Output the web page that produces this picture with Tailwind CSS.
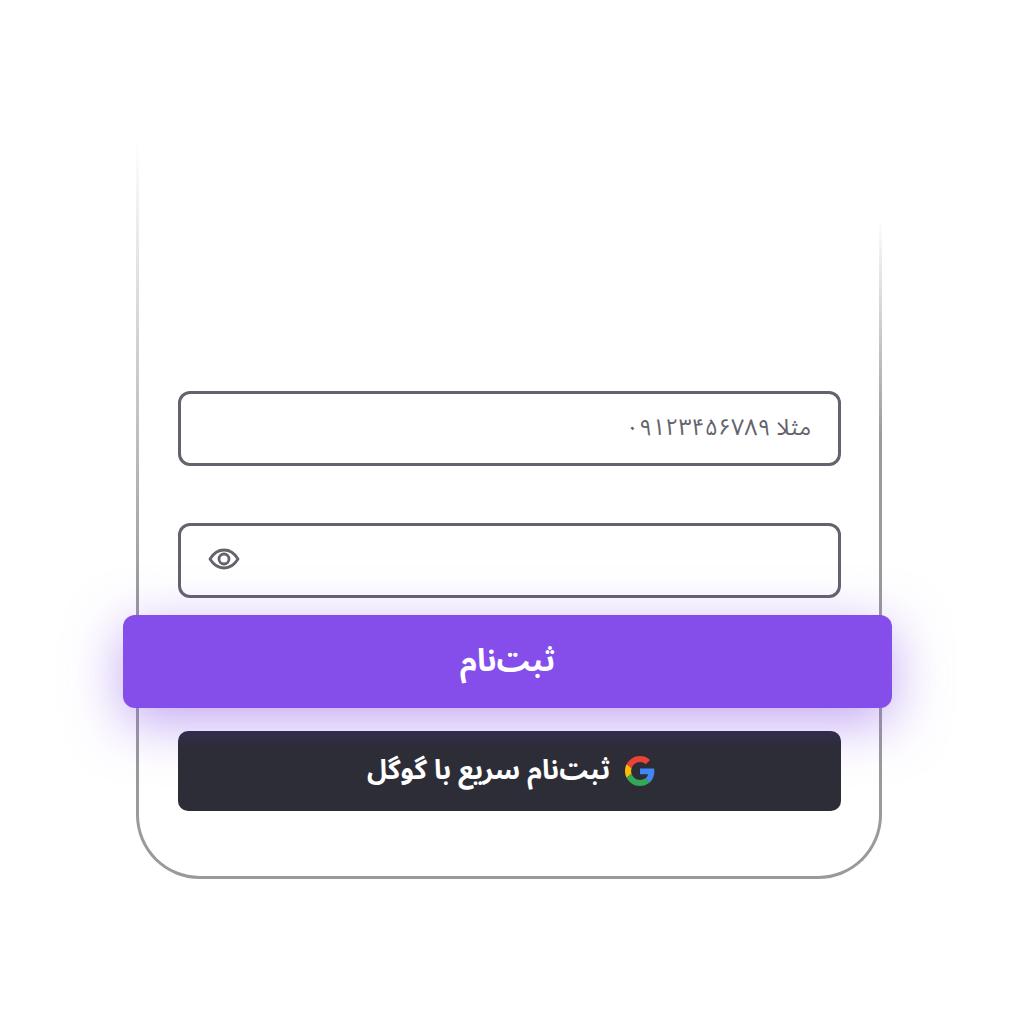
<!DOCTYPE html>
<html lang="fa" dir="rtl">
<head>
    <meta charset="UTF-8">
    <meta name="viewport" content="width=device-width, initial-scale=1.0">
    <title>ثبت‌نام</title>
    <script src="https://cdn.jsdelivr.net/npm/@tailwindcss/browser@4"></script>
</head>
<body class="bg-white font-['Noto_Sans_Arabic','Vazirmatn','DejaVu_Sans',sans-serif]">
    <div class="w-[1016px] h-[1016px] pt-[120px] overflow-hidden">
        <!-- Phone frame -->
        <div class="relative w-[746px] h-[759px] ml-[136px] mr-auto border-x-[3px] border-b-[3px] border-[#9a9a9a] rounded-b-[64px] pl-[39px] pr-[38px] pt-[271px]">
            <!-- Fades the frame sides out towards the top -->
            <div class="absolute top-0 -left-[3px] w-[3px] h-[480px] bg-[linear-gradient(180deg,#fff_4%,rgba(255,255,255,0)_100%)]"></div>
            <div class="absolute top-0 -right-[3px] w-[3px] h-[320px] bg-[linear-gradient(180deg,#fff_31%,rgba(255,255,255,0)_100%)]"></div>

            <div class="relative flex flex-col">
                <!-- Phone number -->
                <div class="h-[75px] border-[3px] border-[#63636e] rounded-[12px] flex items-center gap-[6px] px-[27px] text-[23px] text-[#63636e] bg-white">
                    <span>مثلا</span><span class="tracking-[0.95px]">۰۹۱۲۳۴۵۶۷۸۹</span>
                </div>

                <!-- Password -->
                <div class="h-[75px] mt-[57px] border-[3px] border-[#63636e] rounded-[12px] flex items-center justify-end px-[27px] bg-white">
                    <svg class="w-[32px] h-[24px] mb-[3px]" viewBox="0 0 32 24" fill="none" stroke="#63636e" stroke-width="2.8">
                        <path d="M2 12C5.5 6.3 10.3 3 16 3s10.5 3.3 14 9c-3.5 5.7-8.3 9-14 9S5.5 17.7 2 12z" stroke-linejoin="round"/>
                        <circle cx="16" cy="12" r="5"/>
                    </svg>
                </div>

                <!-- Submit -->
                <button class="relative z-10 h-[93px] mt-[17px] -mr-[51px] -ml-[55px] rounded-[12px] bg-[#854dea] text-white text-[31px] font-bold shadow-[0_14px_54px_rgba(133,77,234,0.5)]">
                    ثبت‌نام
                </button>

                <!-- Google signup -->
                <button class="relative z-20 h-[80px] mt-[23px] pl-[3px] rounded-[10px] bg-[linear-gradient(180deg,#332b50,#2d2d38_20%)] text-white text-[27px] font-bold flex items-center justify-center gap-[15px]">
                    <svg class="w-[30px] h-[30px]" viewBox="0 0 48 48">
                        <path fill="#EA4335" d="M24 9.5c3.54 0 6.71 1.22 9.21 3.6l6.85-6.85C35.9 2.38 30.47 0 24 0 14.62 0 6.51 5.38 2.56 13.22l7.98 6.19C12.43 13.72 17.74 9.5 24 9.5z"/>
                        <path fill="#4285F4" d="M46.98 24.55c0-1.57-.15-3.09-.38-4.55H24v9.02h12.94c-.58 2.96-2.26 5.48-4.78 7.18l7.73 6c4.51-4.18 7.09-10.36 7.09-17.65z"/>
                        <path fill="#FBBC05" d="M10.53 28.59c-.48-1.45-.76-2.99-.76-4.59s.27-3.14.76-4.59l-7.98-6.19C.92 16.46 0 20.12 0 24c0 3.88.92 7.54 2.56 10.78l7.97-6.19z"/>
                        <path fill="#34A853" d="M24 48c6.48 0 11.93-2.13 15.89-5.81l-7.73-6c-2.15 1.45-4.92 2.3-8.16 2.3-6.26 0-11.57-4.22-13.47-9.91l-7.98 6.19C6.51 42.62 14.62 48 24 48z"/>
                    </svg>
                    <span>ثبت‌نام سریع با گوگل</span>
                </button>
            </div>
        </div>
    </div>
</body>
</html>
